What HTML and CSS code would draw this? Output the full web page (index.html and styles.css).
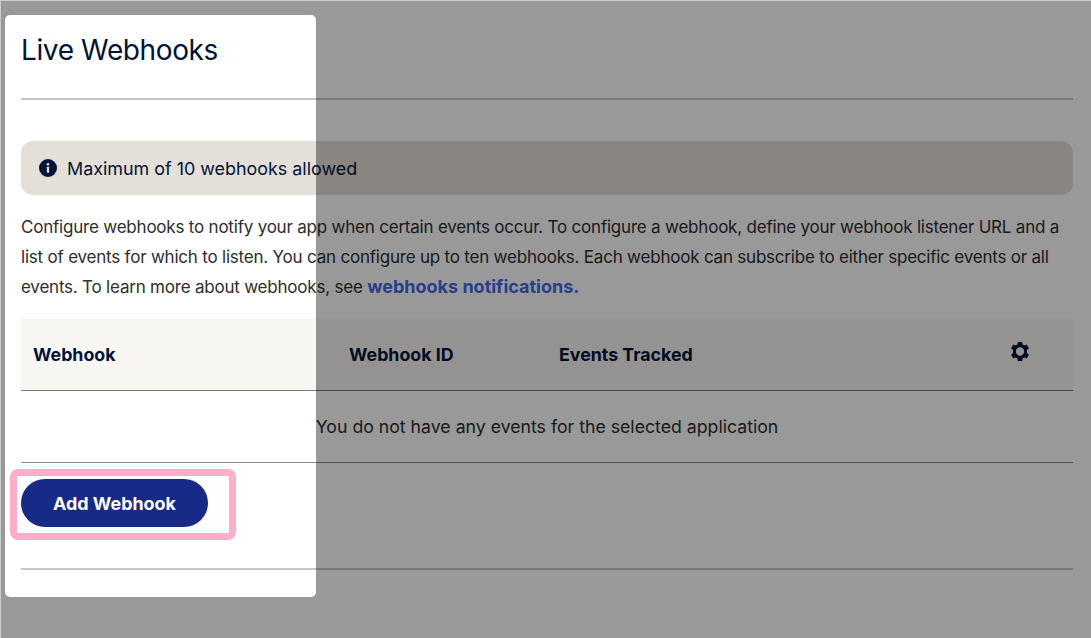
FILE: index.html
```html
<!DOCTYPE html>
<html lang="en">
<head>
    <meta charset="UTF-8">
    <meta name="viewport" content="width=device-width, initial-scale=1.0">
    <title>Live Webhooks</title>
    <link rel="stylesheet" href="styles.css">
</head>
<body>
    <main class="page">
        <h1>Live Webhooks</h1>
        <hr class="rule">

        <div class="alert">
            <svg class="alert-icon" viewBox="0 0 18 18" aria-hidden="true">
                <circle cx="9" cy="9" r="9" fill="#001435"/>
                <circle cx="9" cy="5.200" r="1.300" fill="#e4dfd9"/>
                <rect x="7.900" y="7.800" width="2.200" height="6" rx="0.400" fill="#e4dfd9"/>
            </svg>
            <span>Maximum of 10 webhooks allowed</span>
        </div>

        <p class="intro">Configure webhooks to notify your app when certain events occur. To configure a webhook, define your webhook listener URL and a list of events for which to listen. You can configure up to ten webhooks. Each webhook can subscribe to either specific events or all events. To learn more about webhooks, see <a href="#">webhooks notifications.</a></p>

        <div class="table">
            <div class="table-head">
                <div>Webhook</div>
                <div>Webhook ID</div>
                <div>Events Tracked</div>
                <div class="gear-cell">
                    <svg class="gear" viewBox="1.700 1 20.600 22" aria-hidden="true">
                        <path fill-rule="evenodd" d="M9.500 1h5l.5 3 2 1.100 2.800-1.100 2.500 4.300-2.300 1.900v3.600l2.300 1.900-2.500 4.300-2.800-1.100-2 1.100-.5 3h-5l-.5-3-2-1.100-2.800 1.100-2.500-4.300 2.300-1.900V10.200L1.700 8.300l2.500-4.300L7 5.100l2-1.100zM12 7.200a4.800 4.800 0 1 0 0 9.600 4.800 4.800 0 0 0 0-9.600z" fill="#001435"/>
                    </svg>
                </div>
            </div>
            <div class="table-empty">You do not have any events for the selected application</div>
        </div>

        <button class="add-btn">Add Webhook</button>
        <hr class="rule rule-bottom">
    </main>

    <!-- tour overlay: the box shadow dims everything around the spotlight -->
    <div class="overlay">
        <div class="spotlight"></div>
    </div>
    <div class="highlight"></div>
</body>
</html>
```

FILE: styles.css
```css
html, body {
    margin: 0;
    height: 100%;
    overflow: hidden;
}
body {
    font-family: Inter, "Liberation Sans", sans-serif;
    background-color: white;
    color: #2c2e2f;
}
.page {
    padding: 0 18px 0 21px;
}
h1 {
    margin: 0;
    padding-top: 32px;
    height: 98px;
    box-sizing: border-box;
    font-size: 28px;
    line-height: 36px;
    letter-spacing: -0.38px;
    font-weight: 400;
    color: #001435;
}
.rule {
    margin: 0;
    border: none;
    border-top: 2px solid #c6c6c6;
}
.rule-bottom {
    margin-top: 41px;
}
.alert {
    margin-top: 41px;
    height: 54px;
    display: flex;
    align-items: center;
    gap: 10px;
    padding-left: 18px;
    border-radius: 12px;
    background-color: #e4dfd9;
    color: #001435;
    font-size: 17.9px;
}
.alert-icon {
    width: 18px;
    height: 18px;
}
.intro {
    margin: 17px 0;
    font-size: 17px;
    letter-spacing: -0.21px;
    line-height: 30px;
}
.intro a {
    color: #4269e8;
    font-size: 18px;
    letter-spacing: 0;
    font-weight: 700;
    text-decoration: none;
}
.table-head {
    display: grid;
    grid-template-columns: 316px 210px 1fr 62px;
    align-items: center;
    height: 72px;
    box-sizing: border-box;
    padding-left: 12px;
    background-color: #f8f6f3;
    border-bottom: 1px solid #7d7d7d;
    color: #001435;
    font-size: 17.8px;
    font-weight: 700;
}
.gear-cell {
    display: flex;
    margin-top: -6px;
}
.gear {
    width: 18px;
    height: 19px;
}
.table-empty {
    height: 72px;
    box-sizing: border-box;
    display: flex;
    align-items: center;
    justify-content: center;
    border-bottom: 1px solid #8c8c8c;
    font-size: 17.7px;
}
.add-btn {
    display: block;
    margin-top: 16px;
    width: 187px;
    height: 48px;
    border: none;
    border-radius: 24px;
    background-color: #182a87;
    color: white;
    font-family: inherit;
    font-size: 17.9px;
    font-weight: 700;
}
.overlay {
    position: absolute;
    inset: 0;
    box-sizing: border-box;
    overflow: hidden;
    border-top: 1px solid rgba(0, 0, 0, 0.2);
    border-left: 1px solid rgba(0, 0, 0, 0.2);
}
.spotlight {
    position: absolute;
    left: 4.3px;
    top: 14px;
    width: 310.500px;
    height: 582px;
    border-radius: 5px;
    box-shadow: 0 0 0 2000px rgba(0, 0, 0, 0.4);
}
.highlight {
    position: absolute;
    left: 10px;
    top: 469px;
    width: 226px;
    height: 71px;
    box-sizing: border-box;
    border: 7px solid #ffadc8;
    border-radius: 8px;
}
```
